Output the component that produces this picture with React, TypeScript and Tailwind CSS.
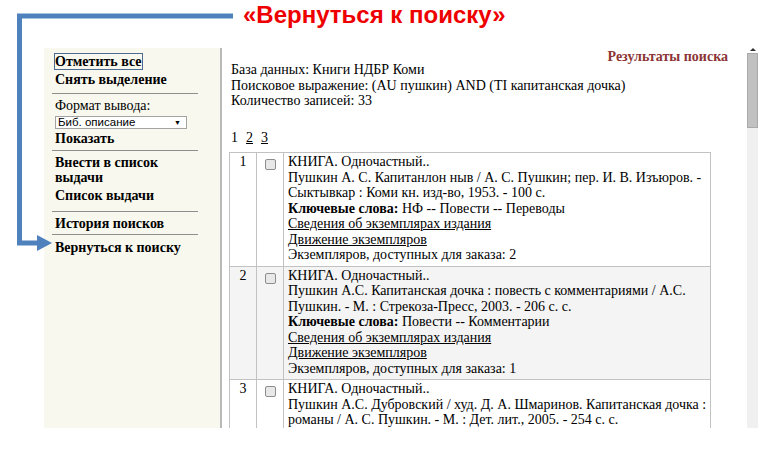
const serif = "font-['Liberation_Serif','Times_New_Roman',serif]";

type Rec = {
	n: number;
	lines: string[];
	keywords?: string;
	count?: number;
	shaded?: boolean;
};

const records: Rec[] = [
	{
		n: 1,
		lines: [
			"Пушкин А. С. Капитанлон ныв / А. С. Пушкин; пер. И. В. Изъюров. -",
			"Сыктывкар : Коми кн. изд-во, 1953. - 100 с.",
		],
		keywords: "НФ -- Повести -- Переводы",
		count: 2,
	},
	{
		n: 2,
		lines: [
			"Пушкин А.С. Капитанская дочка : повесть с комментариями / А.С.",
			"Пушкин. - М. : Стрекоза-Пресс, 2003. - 206 с. с.",
		],
		keywords: "Повести -- Комментарии",
		count: 1,
		shaded: true,
	},
	{
		n: 3,
		lines: [
			"Пушкин А.С. Дубровский / худ. Д. А. Шмаринов. Капитанская дочка :",
			"романы / А. С. Пушкин. - М. : Дет. лит., 2005. - 254 с. с.",
		],
	},
];

const Sep = ({ className }: { className: string }) => (
	<div className={`w-[146px] h-px bg-[#8e8e8e] ${className}`} />
);

const Sidebar = () => (
	<aside className="w-[178px] shrink-0 bg-[#f9f8ee] border-r-2 border-[#b9b9b9] pl-[8px] pt-[6px] text-[14px] leading-[15px]">
		<div className="pl-[3px] font-bold">
			<span className="outline-1 outline-solid outline-[#4d6a93]">Отметить все</span>
		</div>
		<div className="pl-[3px] font-bold mt-[3px]">Снять выделение</div>
		<Sep className="mt-[6px]" />
		<div className="pl-[3px] mt-[4px]">Формат вывода:</div>
		<div className="ml-[3px] mt-[3px] w-[132px] h-[13px] bg-white border border-[#a3a3a3] flex items-center justify-between pl-[2px] pr-[5px] font-['Liberation_Sans',Arial,sans-serif] text-[11.5px] leading-[11px]">
			<span>Биб. описание</span>
			<span className="text-[7px]">▼</span>
		</div>
		<div className="pl-[3px] font-bold mt-[2px]">Показать</div>
		<Sep className="mt-[4px]" />
		<div className="pl-[3px] font-bold mt-[4px]">
			Внести в список
			<br />
			выдачи
		</div>
		<div className="pl-[3px] font-bold mt-[3px]">Список выдачи</div>
		<Sep className="mt-[8px]" />
		<div className="pl-[3px] font-bold mt-[4px]">История поисков</div>
		<Sep className="mt-[3px]" />
		<div className="pl-[3px] font-bold mt-[5px]">Вернуться к поиску</div>
	</aside>
);

const Checkbox = () => (
	<span className="inline-block w-[11px] h-[11px] rounded-[2px] border border-[#8d8d8d] bg-[#e8e8e8]" />
);

const Row = ({ r }: { r: Rec }) => (
	<tr className={r.shaded ? "bg-[#f4f4f4]" : "bg-white"}>
		<td className="w-[27px] border border-[#c2c2c2] align-top text-center pt-[1px] leading-[15.5px]">
			{r.n}
		</td>
		<td className="w-[27px] border border-[#c2c2c2] align-top text-center pt-[2px]">
			<Checkbox />
		</td>
		<td
			className={`border border-[#c2c2c2] align-top pl-[4px] pt-[1px] pb-[3px] leading-[15.5px] whitespace-nowrap ${
				r.count ? "" : "h-[80px]"
			}`}
		>
			<div>КНИГА. Одночастный..</div>
			{r.lines.map((l) => (
				<div key={l}>{l}</div>
			))}
			{r.keywords && (
				<div>
					<b>Ключевые слова:</b> {r.keywords}
				</div>
			)}
			{r.count && (
				<>
					<div className="underline">Сведения об экземплярах издания</div>
					<div className="underline">Движение экземпляров</div>
					<div>Экземпляров, доступных для заказа: {r.count}</div>
				</>
			)}
		</td>
	</tr>
);

const Main = () => (
	<main className="w-[525px] shrink-0 pl-[7px] pt-[3px] text-[14px]">
		<div className="pr-[19px] text-right font-bold text-[#8b3535] leading-[11px]">
			Результаты поиска
		</div>
		<div className="pl-[2px] leading-[15.5px]">
			<div>База данных: Книги НДБР Коми</div>
			<div>Поисковое выражение: (AU пушкин) AND (TI капитанская дочка)</div>
			<div>Количество записей: 33</div>
		</div>
		<div className="pl-[2px] mt-[21px] mb-[7px] flex gap-[8px] leading-[15.5px]">
			<span>1</span>
			<span className="underline">2</span>
			<span className="underline">3</span>
		</div>
		<table className="w-[482px] border-collapse border border-[#c2c2c2]">
			<tbody>
				{records.map((r) => (
					<Row key={r.n} r={r} />
				))}
			</tbody>
		</table>
	</main>
);

const Scrollbar = () => (
	<div className="w-[11px] shrink-0 bg-[#f0f0f0] flex flex-col">
		<div className="h-[5px] bg-white flex justify-center">
			<svg width="6" height="3" viewBox="0 0 6 3">
				<polygon points="0,3 3,0 6,3" fill="#333" />
			</svg>
		</div>
		<div className="h-[75px] bg-[#c1c1c1] border border-[#a9a9a9]" />
	</div>
);

const Bracket = () => (
	<svg
		className="absolute inset-0 pointer-events-none"
		width="779"
		height="455"
		viewBox="0 0 779 455"
	>
		<polyline
			points="233,16 19.5,16 19.5,243 40,243"
			fill="none"
			stroke="#4f81bd"
			strokeWidth="5"
		/>
		<polygon points="37,235 52,243 37,251" fill="#4f81bd" />
	</svg>
);

export default function App() {
	return (
		<div className="relative w-[779px] h-[455px] bg-white overflow-hidden">
			<div className="h-[48px] pl-[243px] pt-[2px] font-['Liberation_Sans',Arial,sans-serif] font-bold text-[24px] leading-[26px] text-[#ee0000]">
				«Вернуться к поиску»
			</div>
			<div className={`ml-[44px] flex w-[714px] h-[380px] overflow-hidden text-black ${serif}`}>
				<Sidebar />
				<Main />
				<Scrollbar />
			</div>
			<Bracket />
		</div>
	);
}
